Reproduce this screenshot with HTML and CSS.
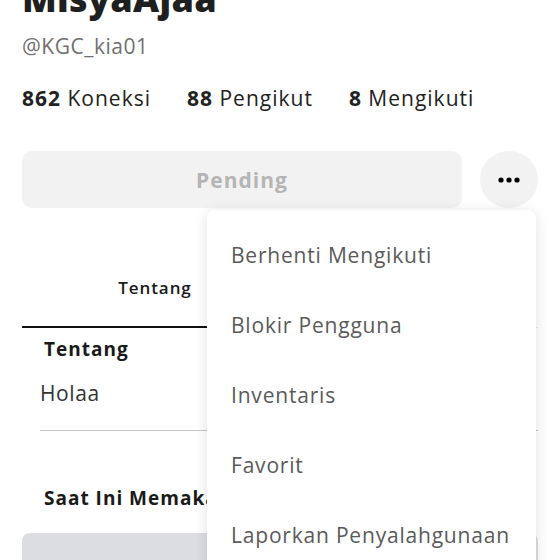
FILE: index.html
```html
<!DOCTYPE html>
<html lang="id">
<head>
  <meta charset="UTF-8">
  <meta name="viewport" content="width=device-width, initial-scale=1.0">
  <title>MisyaAjaa</title>
  <link rel="stylesheet" href="styles.css">
</head>
<body>
  <div class="page">
    <div class="profile-header">
      <h1 class="display-name">MisyaAjaa</h1>
      <div class="username">@KGC_kia01</div>
      <ul class="stats">
        <li><b>862</b> Koneksi</li>
        <li><b>88</b> Pengikut</li>
        <li><b>8</b> Mengikuti</li>
      </ul>
      <div class="actions">
        <button class="btn-pending" disabled>Pending</button>
        <button class="btn-more" aria-label="Lainnya">
          <svg width="22" height="6" viewBox="0 0 22 6"><circle cx="3" cy="3" r="2.6"/><circle cx="11" cy="3" r="2.6"/><circle cx="19" cy="3" r="2.6"/></svg>
        </button>
      </div>
    </div>

    <div class="tabs">
      <div class="tab active">Tentang</div>
      <div class="tab">Kreasi</div>
    </div>

    <section class="about">
      <h3>Tentang</h3>
      <p class="bio">Holaa</p>
      <hr>
      <h3 class="wearing">Saat Ini Memakai</h3>
      <div class="avatar-box"></div>
    </section>

    <ul class="menu">
      <li>Berhenti Mengikuti</li>
      <li>Blokir Pengguna</li>
      <li>Inventaris</li>
      <li>Favorit</li>
      <li>Laporkan Penyalahgunaan</li>
    </ul>
  </div>
</body>
</html>
```

FILE: styles.css
```css
body {
  margin: 0;
  font-family: 'Open Sans', 'Noto Sans', sans-serif;
  background: #fff;
  color: #1a1a1a;
  overflow: hidden;
}
.page {
  position: relative;
  padding: 0 22px;
  margin-top: -27px;
}
.display-name {
  margin: 0;
  font-size: 36px;
  font-weight: 800;
  line-height: 52px;
  color: #1f1f1f;
  letter-spacing: 0.3px;
}
.username {
  margin-top: 6px;
  font-size: 21px;
  color: #707070;
  line-height: 30px;
  letter-spacing: 0.5px;
}
.stats {
  list-style: none;
  padding: 0;
  margin: 22px 0 0;
  display: flex;
  gap: 36px;
  font-size: 21px;
  line-height: 30px;
  color: #222;
  letter-spacing: 1px;
}
.stats b {
  font-weight: 700;
}
.actions {
  display: flex;
  gap: 18px;
  margin-top: 38px;
}
.btn-pending {
  flex: 1;
  height: 57px;
  border: none;
  border-radius: 10px;
  background: #f2f2f2;
  color: #b5b5b5;
  font-family: inherit;
  font-size: 21px;
  font-weight: 700;
  letter-spacing: 1px;
}
.btn-more {
  width: 58px;
  height: 57px;
  border: none;
  border-radius: 50%;
  background: #f2f2f2;
  display: flex;
  align-items: center;
  justify-content: center;
}
.tabs {
  display: flex;
  margin-top: 68px;
  border-bottom: 1px solid #e3e3e3;
}
.tab {
  flex: 1;
  text-align: center;
  font-size: 17px;
  font-weight: 600;
  padding: 0 0 27px 8px;
  color: #1a1a1a;
  letter-spacing: 0.9px;
}
.tab.active {
  border-bottom: 2px solid #111;
  margin-bottom: -1px;
}
.about {
  padding: 0 0 0 18px;
}
.about h3 {
  margin: 6px 0 0 4px;
  font-size: 19px;
  font-weight: 700;
  line-height: 30px;
  letter-spacing: 1px;
}
.bio {
  margin: 14px 0 0;
  font-size: 21px;
  color: #333;
  line-height: 30px;
  letter-spacing: 0.6px;
}
.about hr {
  border: none;
  border-top: 1px solid #c6c6c6;
  margin: 22px 0 0;
}
.about h3.wearing {
  margin-top: 52px;
}
.avatar-box {
  margin: 20px 0 0 -18px;
  height: 80px;
  border-radius: 8px;
  background: #dcdde0;
}
.menu {
  position: absolute;
  left: 207px;
  top: 237px;
  width: 329px;
  height: 400px;
  margin: 0;
  padding: 10px 0 0;
  list-style: none;
  background: #fff;
  border-radius: 8px;
  box-shadow: 0 2px 14px rgba(0, 0, 0, 0.12);
}
.menu li {
  padding: 0 24px;
  height: 70px;
  line-height: 70px;
  font-size: 21px;
  color: #5a5a5a;
  letter-spacing: 0.8px;
}
```
